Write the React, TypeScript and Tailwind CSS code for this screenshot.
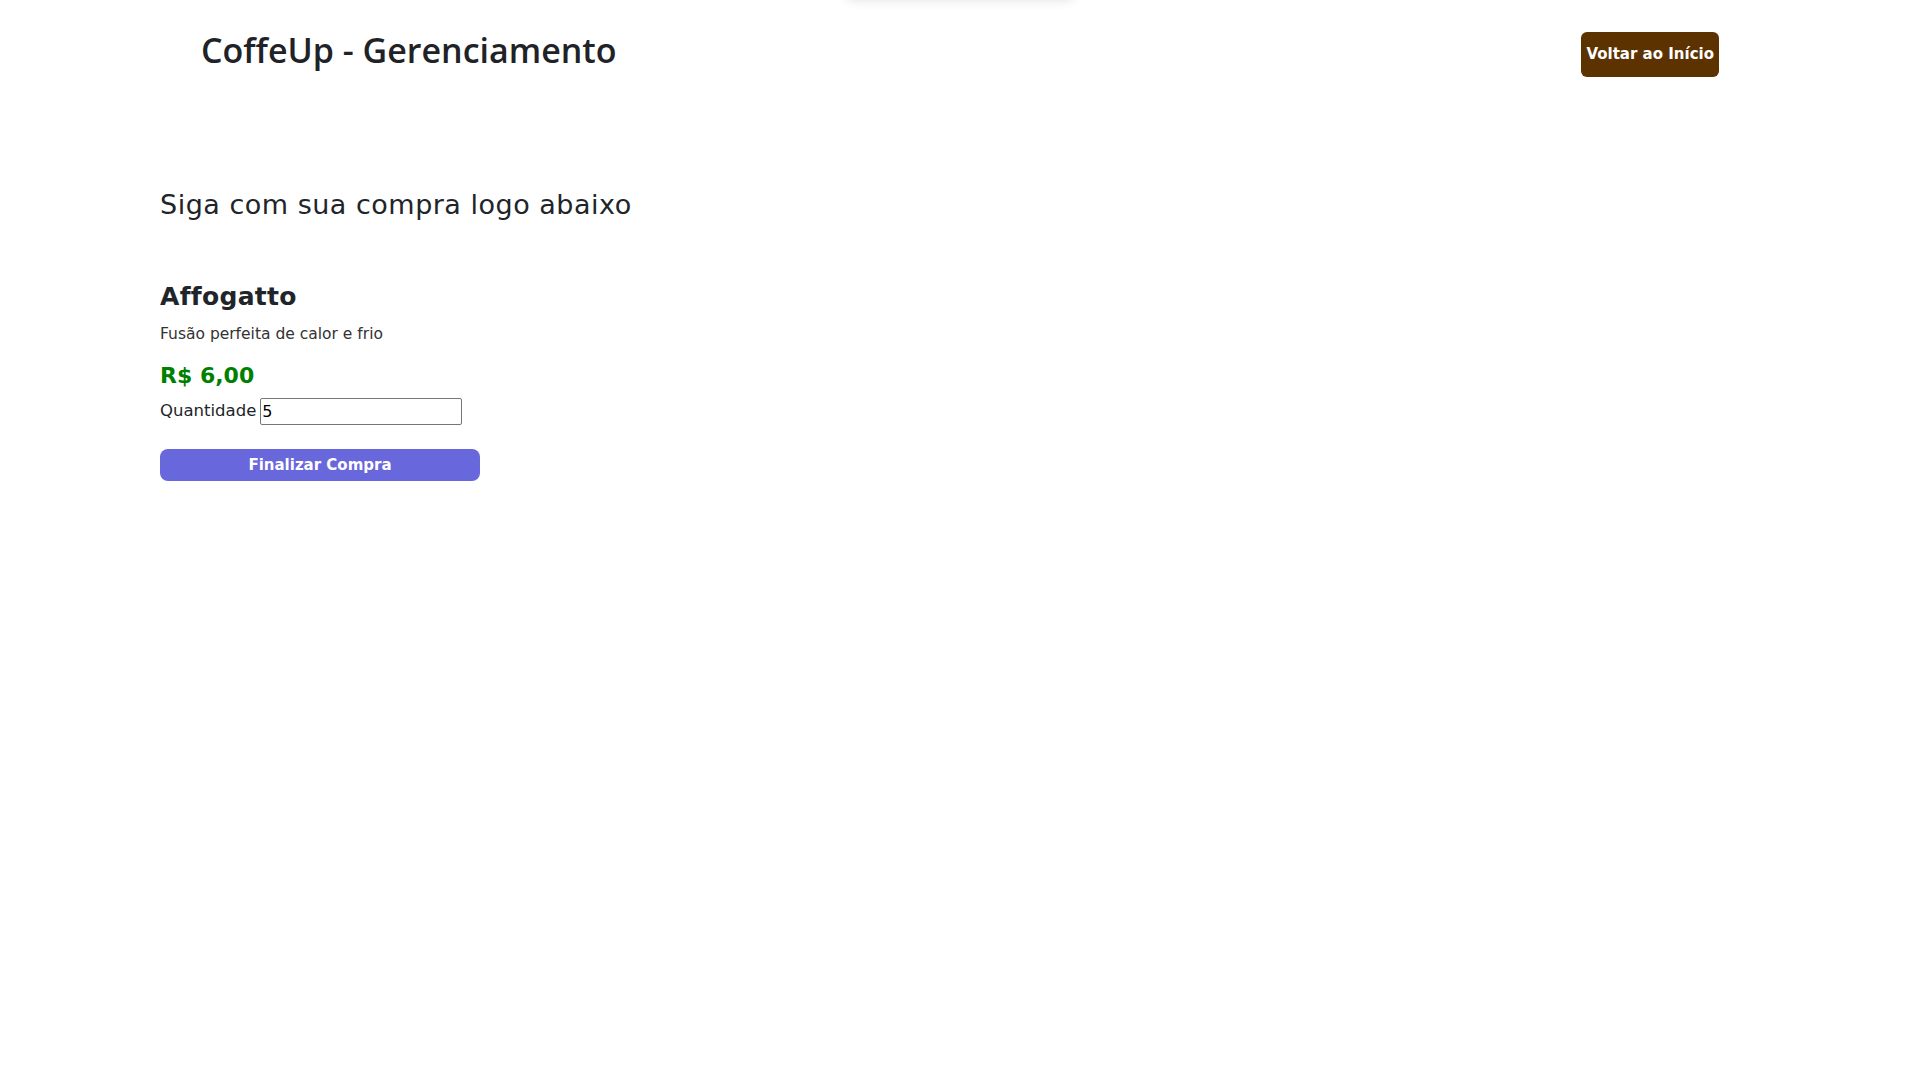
import { useState } from "react";

export default function App() {
  const [qtd, setQtd] = useState("5");

  return (
    <div className="relative min-h-screen overflow-hidden bg-white font-['DejaVu_Sans',sans-serif] text-[#212529]">
      {/* toast escondido acima da tela */}
      <div className="absolute top-[-62px] left-1/2 h-[60px] w-[230px] -translate-x-1/2 rounded-lg bg-white shadow-[0_2px_12px_rgba(0,0,0,0.12)]" />

      <header className="flex items-start justify-between px-[201px] pt-[28px]">
        <h1 className="font-['Open_Sans',sans-serif] text-[34px] leading-[44px] font-semibold text-[#1f2328]">
          CoffeUp - Gerenciamento
        </h1>
        <button
          type="button"
          className="mt-[4px] h-[45px] rounded-md bg-[#5c3200] px-[5px] text-[15px] font-bold text-white"
        >
          Voltar ao Início
        </button>
      </header>

      <main className="px-[160px] pt-[110px]">
        <p className="text-[27px] leading-[36px] font-normal tracking-[0.5px] text-[#212529]">
          Siga com sua compra logo abaixo
        </p>

        <div className="mt-[58px]">
          <h2 className="text-[25px] leading-[32px] font-bold tracking-[0.3px] text-[#212529]">
            Affogatto
          </h2>
          <p className="mt-[10px] text-[15.5px] leading-[22px] text-[#333]">
            Fusão perfeita de calor e frio
          </p>
          <p className="mt-[15px] text-[22px] leading-[32px] font-bold text-[#008000]">
            R$ 6,00
          </p>
          <div className="mt-[6px] flex items-center gap-[4px] text-[16.5px] text-[#212529]">
            <label htmlFor="qtd">Quantidade</label>
            <input
              id="qtd"
              value={qtd}
              onChange={(e) => setQtd(e.target.value)}
              className="h-[27px] w-[202px] rounded-[2px] border border-[#767676] px-[1px] text-[16px] text-black outline-none"
            />
          </div>
          <button
            type="button"
            className="mt-[24px] h-[32px] w-[320px] rounded-lg bg-[#6967dc] text-[15px] font-bold text-white"
          >
            Finalizar Compra
          </button>
        </div>
      </main>
    </div>
  );
}
